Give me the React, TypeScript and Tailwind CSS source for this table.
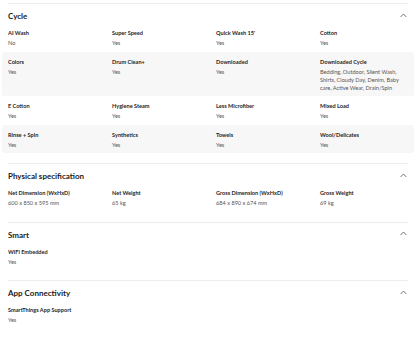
import React from "react";

type Item = { label: string; value: string | string[] };

const Chevron = () => (
  <svg width="7" height="5" viewBox="0 0 7 5" className="mr-[1px] -mt-[2px]">
    <polyline points="0.6,4 3.5,1 6.4,4" fill="none" stroke="#666" strokeWidth="0.9" />
  </svg>
);

const Row = ({ items, band }: { items: Item[]; band?: boolean }) => (
  <div className={`px-[6px] pt-[6px] pb-[4.5px] rounded-[3px] ${band ? "bg-[#f7f7f7]" : ""}`}>
    <div className="grid grid-cols-4 gap-x-[16px]">
      {items.map((it, i) => (
        <div key={i} className="flex flex-col">
          <div className="text-[5.6px] leading-[8px] font-bold text-[#1f1f1f]">{it.label}</div>
          <div className="mt-[2px] text-[5.6px] leading-[8px] text-[#555]">
            {Array.isArray(it.value)
              ? it.value.map((l, j) => <div key={j}>{l}</div>)
              : it.value}
          </div>
        </div>
      ))}
    </div>
  </div>
);

const Section = ({ title, rows, banded }: { title: string; rows: Item[][]; banded?: boolean }) => (
  <div className="pb-[10px]">
    <div className="mx-[8px] border-t border-[#ececec]" />
    <div className="mx-[8px] pt-[7px] flex items-center justify-between">
      <div className="text-[8px] leading-[10px] font-bold text-[#1a1a1a]">{title}</div>
      <Chevron />
    </div>
    <div className="mt-[2px] px-[2px]">
      {rows.map((r, i) => (
        <Row key={i} items={r} band={banded && i % 2 === 1} />
      ))}
    </div>
  </div>
);

export default function App() {
  return (
    <div
      className="w-[416px] h-[339px] bg-white pt-[3px] overflow-hidden"
      style={{ fontFamily: "Lato, 'Open Sans', sans-serif" }}
    >
      <Section
        title="Cycle"
        banded
        rows={[
          [
            { label: "AI Wash", value: "No" },
            { label: "Super Speed", value: "Yes" },
            { label: "Quick Wash 15'", value: "Yes" },
            { label: "Cotton", value: "Yes" },
          ],
          [
            { label: "Colors", value: "Yes" },
            { label: "Drum Clean+", value: "Yes" },
            { label: "Downloaded", value: "Yes" },
            {
              label: "Downloaded Cycle",
              value: [
                "Bedding, Outdoor, Silent Wash,",
                "Shirts, Cloudy Day, Denim, Baby",
                "care, Active Wear, Drain/Spin",
              ],
            },
          ],
          [
            { label: "E Cotton", value: "Yes" },
            { label: "Hygiene Steam", value: "Yes" },
            { label: "Less Microfiber", value: "Yes" },
            { label: "Mixed Load", value: "Yes" },
          ],
          [
            { label: "Rinse + Spin", value: "Yes" },
            { label: "Synthetics", value: "Yes" },
            { label: "Towels", value: "Yes" },
            { label: "Wool/Delicates", value: "Yes" },
          ],
        ]}
      />
      <Section
        title="Physical specification"
        rows={[
          [
            { label: "Net Dimension (WxHxD)", value: "600 x 850 x 595 mm" },
            { label: "Net Weight", value: "65 kg" },
            { label: "Gross Dimension (WxHxD)", value: "684 x 890 x 674 mm" },
            { label: "Gross Weight", value: "69 kg" },
          ],
        ]}
      />
      <Section title="Smart" rows={[[{ label: "WiFi Embedded", value: "Yes" }]]} />
      <Section
        title="App Connectivity"
        rows={[[{ label: "SmartThings App Support", value: "Yes" }]]}
      />
    </div>
  );
}
